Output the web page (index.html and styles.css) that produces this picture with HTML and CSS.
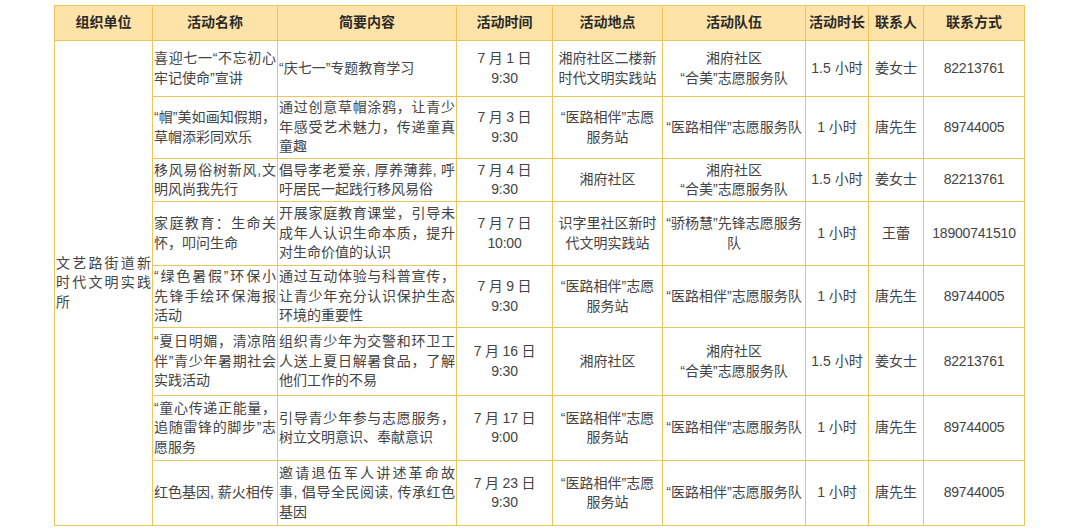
FILE: index.html
```html
<!DOCTYPE html>
<html lang="zh-CN">
<head>
<meta charset="utf-8">
<title>活动安排表</title>
<link rel="stylesheet" href="styles.css">
</head>
<body>
<div class="page">
<table class="sheet">
<colgroup>
<col class="c-org"><col class="c-name"><col class="c-desc"><col class="c-time"><col class="c-place"><col class="c-team"><col class="c-dur"><col class="c-person"><col class="c-phone">
</colgroup>
<thead>
<tr class="rh"><th>组织单位</th><th>活动名称</th><th>简要内容</th><th>活动时间</th><th>活动地点</th><th>活动队伍</th><th>活动时长</th><th>联系人</th><th>联系方式</th></tr>
</thead>
<tbody>
<tr class="r1">
<td class="tx org" rowspan="8"><span>文艺路街道新</span><span>时代文明实践</span><span>所</span></td>
<td class="tx"><span>喜迎七一“不忘初心</span><span>牢记使命”宣讲</span></td>
<td class="tx"><span>“庆七一”专题教育学习</span></td>
<td class="num">7 月 1 日<br>9:30</td>
<td>湘府社区二楼新<br>时代文明实践站</td>
<td>湘府社区<br>“合美”志愿服务队</td>
<td>1.5 小时</td>
<td>姜女士</td>
<td class="num">82213761</td>
</tr>
<tr class="r2">
<td class="tx"><span>“帽”美如画知假期，</span><span>草帽添彩同欢乐</span></td>
<td class="tx"><span>通过创意草帽涂鸦，让青少</span><span>年感受艺术魅力，传递童真</span><span>童趣</span></td>
<td class="num">7 月 3 日<br>9:30</td>
<td>“医路相伴”志愿<br>服务站</td>
<td>“医路相伴”志愿服务队</td>
<td>1 小时</td>
<td>唐先生</td>
<td class="num">89744005</td>
</tr>
<tr class="r3">
<td class="tx"><span>移风易俗树新风,文</span><span>明风尚我先行</span></td>
<td class="tx"><span>倡导孝老爱亲, 厚养薄葬, 呼</span><span>吁居民一起践行移风易俗</span></td>
<td class="num">7 月 4 日<br>9:30</td>
<td>湘府社区</td>
<td>湘府社区<br>“合美”志愿服务队</td>
<td>1.5 小时</td>
<td>姜女士</td>
<td class="num">82213761</td>
</tr>
<tr class="r4">
<td class="tx"><span>家庭教育：生命关</span><span>怀，叩问生命</span></td>
<td class="tx"><span>开展家庭教育课堂，引导未</span><span>成年人认识生命本质，提升</span><span>对生命价值的认识</span></td>
<td class="num">7 月 7 日<br>10:00</td>
<td>识字里社区新时<br>代文明实践站</td>
<td>“骄杨慧”先锋志愿服务<br>队</td>
<td>1 小时</td>
<td>王蕾</td>
<td class="num">18900741510</td>
</tr>
<tr class="r5">
<td class="tx"><span>“绿色暑假”环保小</span><span>先锋手绘环保海报</span><span>活动</span></td>
<td class="tx"><span>通过互动体验与科普宣传，</span><span>让青少年充分认识保护生态</span><span>环境的重要性</span></td>
<td class="num">7 月 9 日<br>9:30</td>
<td>“医路相伴”志愿<br>服务站</td>
<td>“医路相伴”志愿服务队</td>
<td>1 小时</td>
<td>唐先生</td>
<td class="num">89744005</td>
</tr>
<tr class="r6">
<td class="tx"><span>“夏日明媚，清凉陪</span><span>伴”青少年暑期社会</span><span>实践活动</span></td>
<td class="tx"><span>组织青少年为交警和环卫工</span><span>人送上夏日解暑食品，了解</span><span>他们工作的不易</span></td>
<td class="num">7 月 16 日<br>9:30</td>
<td>湘府社区</td>
<td>湘府社区<br>“合美”志愿服务队</td>
<td>1.5 小时</td>
<td>姜女士</td>
<td class="num">82213761</td>
</tr>
<tr class="r7">
<td class="tx"><span>“童心传递正能量，</span><span>追随雷锋的脚步”志</span><span>愿服务</span></td>
<td class="tx"><span>引导青少年参与志愿服务，</span><span>树立文明意识、奉献意识</span></td>
<td class="num">7 月 17 日<br>9:00</td>
<td>“医路相伴”志愿<br>服务站</td>
<td>“医路相伴”志愿服务队</td>
<td>1 小时</td>
<td>唐先生</td>
<td class="num">89744005</td>
</tr>
<tr class="r8">
<td class="tx"><span>红色基因, 薪火相传</span></td>
<td class="tx"><span>邀请退伍军人讲述革命故</span><span>事, 倡导全民阅读, 传承红色</span><span>基因</span></td>
<td class="num">7 月 23 日<br>9:30</td>
<td>“医路相伴”志愿<br>服务站</td>
<td>“医路相伴”志愿服务队</td>
<td>1 小时</td>
<td>唐先生</td>
<td class="num">89744005</td>
</tr>
</tbody>
</table>
</div>
</body>
</html>
```

FILE: styles.css
```css
html, body {
  margin: 0;
  padding: 0;
  background: #ffffff;
}

body {
  font-family: "Liberation Sans", "Noto Sans CJK SC", sans-serif;
  font-size: 14px;
  color: #444444;
}

.page {
  padding: 5px 0 0 54px;
}

.sheet {
  border-collapse: collapse;
  table-layout: fixed;
  width: 970px;
}

.c-org { width: 98px; }
.c-name { width: 125px; }
.c-desc { width: 179px; }
.c-time { width: 96px; }
.c-place { width: 110px; }
.c-team { width: 143px; }
.c-dur { width: 63px; }
.c-person { width: 55px; }
.c-phone { width: 101px; }

.sheet th,
.sheet td {
  border: 1px solid #eec55a;
  padding: 0 1px;
  vertical-align: middle;
  text-align: center;
  line-height: 19.5px;
  white-space: nowrap;
}

.sheet th {
  background: #fde3a7;
  font-weight: 700;
  color: #2a2a2a;
}

.rh { height: 35px; }
.r1 { height: 56px; }
.r2 { height: 62px; }
.r3 { height: 43px; }
.r4 { height: 64px; }
.r5 { height: 62px; }
.r6 { height: 68px; }
.r7 { height: 65px; }
.r8 { height: 65px; }

.tx {
  text-align: left;
}

.tx span {
  display: block;
  text-align: justify;
  text-align-last: justify;
}

.tx span:last-child {
  text-align-last: left;
}

.org {
  line-height: 20px;
}

.num {
  letter-spacing: -0.2px;
}
```
